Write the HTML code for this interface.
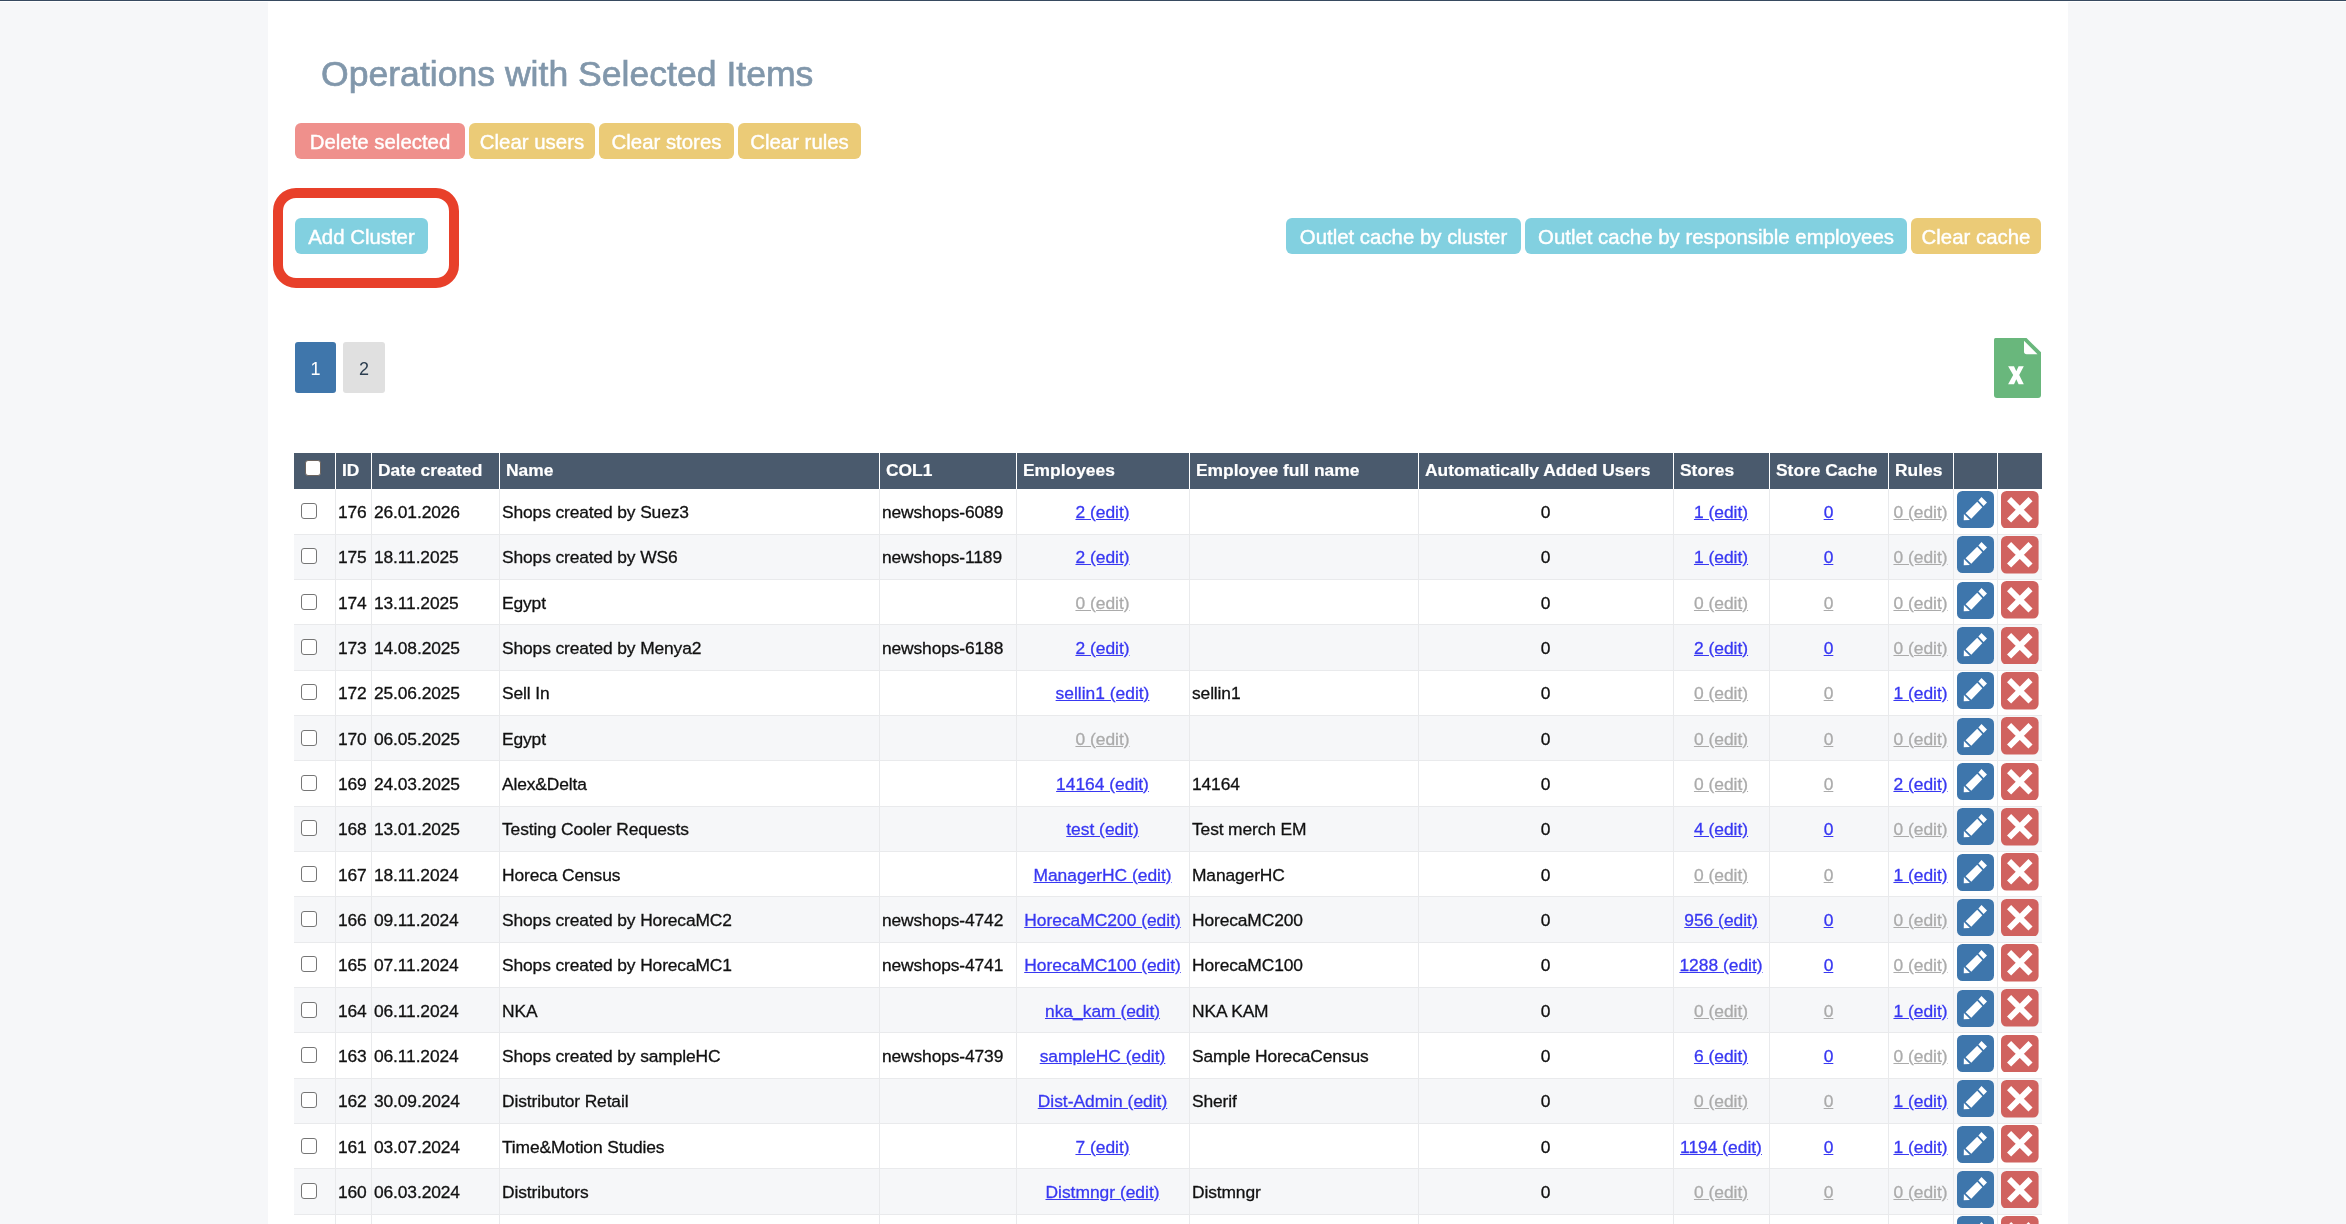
<!DOCTYPE html><html><head><meta charset="utf-8"><title>Clusters</title><style>
*{margin:0;padding:0;box-sizing:border-box}
html,body{width:2346px;height:1224px;overflow:hidden;background:#f6f7f9;font-family:"Liberation Sans",sans-serif}
.a{position:absolute}
#wrap{position:absolute;left:0;top:0;width:2346px;height:1224px;will-change:transform}
#topl{left:0;top:0;width:2346px;height:1px;background:#374a60}
#topw{left:0;top:1px;width:2346px;height:1px;background:#fff}
#panel{left:268px;top:1px;width:1800px;height:1223px;background:#fff}
#title{left:321px;top:52.3px;font-size:35.6px;line-height:44px;color:#8197ab;white-space:nowrap;-webkit-text-stroke:0.7px #8197ab}
.btn{height:36px;top:123px;border-radius:6px;color:#fff;font-size:20.4px;line-height:38px;text-align:center;white-space:nowrap;-webkit-text-stroke:0.4px #fff}
.red{background:#ef908c}.yel{background:#ebcb77}.cy{background:#82d0e0}
#hl{left:273px;top:188px;width:186px;height:100px;border:10px solid #e8402a;border-radius:23px}
.pg{top:342px;width:41px;height:51px;border-radius:3px;font-size:18px;line-height:54px;text-align:center}
.hd{top:453px;height:36px;background:#4a5a6d}
.hsep{top:453px;height:36px;width:1px;background:#fff}
.ht{top:452px;height:36px;line-height:36px;color:#fff;font-weight:bold;font-size:17.4px;white-space:nowrap;-webkit-text-stroke-width:0.2px}
.row{left:294px;width:1748px}
.rs{background:#f6f7f9}
.rb{left:294px;width:1748px;height:1px;background:#e9eaec}
.vsep{width:1px;background:#e9eaec}
.t{font-size:17.4px;white-space:nowrap;color:#111;line-height:46.5px;-webkit-text-stroke-width:0.3px;letter-spacing:-0.12px}
.c{text-align:center}
.lk{color:#3838f2;text-decoration:underline;letter-spacing:0}
.gr{color:#ababab;text-decoration:underline;letter-spacing:0}
.cb{width:16px;height:16px;border:1.3px solid #767676;border-radius:3px;background:#fff}
.eb{width:37px;height:37px;border-radius:6px;background:#3e76ac}
.db{width:38px;height:38px;border-radius:6px;background:#d0625f}
</style></head><body>
<div id="wrap">
<div class="a" id="topl"></div><div class="a" id="topw"></div><div class="a" id="panel"></div>
<div class="a" id="title">Operations with Selected Items</div>
<div class="a btn red" style="left:295px;width:170px">Delete selected</div>
<div class="a btn yel" style="left:469px;width:126px">Clear users</div>
<div class="a btn yel" style="left:599px;width:135px">Clear stores</div>
<div class="a btn yel" style="left:738px;width:123px">Clear rules</div>
<div class="a btn cy" style="left:295px;width:133px;top:218px">Add Cluster</div>
<div class="a btn cy" style="left:1286px;width:235px;top:218px">Outlet cache by cluster</div>
<div class="a btn cy" style="left:1525px;width:382px;top:218px">Outlet cache by responsible employees</div>
<div class="a btn yel" style="left:1911px;width:130px;top:218px">Clear cache</div>
<div class="a" id="hl"></div>
<div class="a pg" style="left:295px;background:#3f76ab;color:#fff">1</div>
<div class="a pg" style="left:343px;width:42px;background:#e0e0e0;color:#2c3e50">2</div>
<svg class="a" style="left:1994px;top:338px" width="47" height="60" viewBox="0 0 47 60">
<path d="M1.5 0 H32.5 L47 14.3 V57 Q47 60 44 60 H3 Q0 60 0 57 V1.5 Q0 0 1.5 0 Z" fill="#69b77c"/>
<path d="M30 2.8 V13.5 Q30 16.2 32.7 16.2 H43.5 Z" fill="#fff"/>
<path d="M14.1 28.2 H20.0 L22.3 33.2 L24.6 28.2 H29.8 L25.2 36.9 L29.8 46.3 H24.6 L22.3 41.3 L20.0 46.3 H14.1 L19.2 36.9 Z" fill="#fff"/>
</svg>
<div class="a hd" style="left:294px;width:1748px"></div>
<div class="a hsep" style="left:335px"></div>
<div class="a hsep" style="left:371px"></div>
<div class="a hsep" style="left:499px"></div>
<div class="a hsep" style="left:879px"></div>
<div class="a hsep" style="left:1016px"></div>
<div class="a hsep" style="left:1189px"></div>
<div class="a hsep" style="left:1418px"></div>
<div class="a hsep" style="left:1673px"></div>
<div class="a hsep" style="left:1769px"></div>
<div class="a hsep" style="left:1888px"></div>
<div class="a hsep" style="left:1953px"></div>
<div class="a hsep" style="left:1997px"></div>
<div class="a ht" style="left:342px">ID</div>
<div class="a ht" style="left:378px">Date created</div>
<div class="a ht" style="left:506px">Name</div>
<div class="a ht" style="left:886px">COL1</div>
<div class="a ht" style="left:1023px">Employees</div>
<div class="a ht" style="left:1196px">Employee full name</div>
<div class="a ht" style="left:1425px">Automatically Added Users</div>
<div class="a ht" style="left:1680px">Stores</div>
<div class="a ht" style="left:1776px">Store Cache</div>
<div class="a ht" style="left:1895px">Rules</div>
<div class="a cb" style="left:305px;top:460px;border-color:#6d6560"></div>
<div class="a row rs" style="top:534.333px;height:45.333px"></div>
<div class="a row rs" style="top:624.999px;height:45.333px"></div>
<div class="a row rs" style="top:715.665px;height:45.333px"></div>
<div class="a row rs" style="top:806.331px;height:45.333px"></div>
<div class="a row rs" style="top:896.997px;height:45.333px"></div>
<div class="a row rs" style="top:987.663px;height:45.333px"></div>
<div class="a row rs" style="top:1078.329px;height:45.333px"></div>
<div class="a row rs" style="top:1168.995px;height:45.333px"></div>
<div class="a rb" style="top:534px"></div>
<div class="a rb" style="top:579px"></div>
<div class="a rb" style="top:624px"></div>
<div class="a rb" style="top:670px"></div>
<div class="a rb" style="top:715px"></div>
<div class="a rb" style="top:760px"></div>
<div class="a rb" style="top:806px"></div>
<div class="a rb" style="top:851px"></div>
<div class="a rb" style="top:896px"></div>
<div class="a rb" style="top:942px"></div>
<div class="a rb" style="top:987px"></div>
<div class="a rb" style="top:1032px"></div>
<div class="a rb" style="top:1078px"></div>
<div class="a rb" style="top:1123px"></div>
<div class="a rb" style="top:1168px"></div>
<div class="a rb" style="top:1214px"></div>
<div class="a vsep" style="left:335px;top:489px;height:735px"></div>
<div class="a vsep" style="left:371px;top:489px;height:735px"></div>
<div class="a vsep" style="left:499px;top:489px;height:735px"></div>
<div class="a vsep" style="left:879px;top:489px;height:735px"></div>
<div class="a vsep" style="left:1016px;top:489px;height:735px"></div>
<div class="a vsep" style="left:1189px;top:489px;height:735px"></div>
<div class="a vsep" style="left:1418px;top:489px;height:735px"></div>
<div class="a vsep" style="left:1673px;top:489px;height:735px"></div>
<div class="a vsep" style="left:1769px;top:489px;height:735px"></div>
<div class="a vsep" style="left:1888px;top:489px;height:735px"></div>
<div class="a vsep" style="left:1953px;top:489px;height:735px"></div>
<div class="a vsep" style="left:1997px;top:489px;height:735px"></div>
<div class="a cb" style="left:301px;top:503.000px"></div>
<div class="a t" style="left:338px;top:489.000px">176</div>
<div class="a t" style="left:374px;top:489.000px">26.01.2026</div>
<div class="a t" style="left:502px;top:489.000px">Shops created by Suez3</div>
<div class="a t" style="left:882px;top:489.000px">newshops-6089</div>
<div class="a t c" style="left:1016px;width:173px;top:489.000px"><span class="lk">2 (edit)</span></div>
<div class="a t c" style="left:1418px;width:255px;top:489.000px">0</div>
<div class="a t c" style="left:1673px;width:96px;top:489.000px"><span class="lk">1 (edit)</span></div>
<div class="a t c" style="left:1769px;width:119px;top:489.000px"><span class="lk">0</span></div>
<div class="a t c" style="left:1888px;width:65px;top:489.000px"><span class="gr">0 (edit)</span></div>
<div class="a cb" style="left:301px;top:548.333px"></div>
<div class="a t" style="left:338px;top:534.333px">175</div>
<div class="a t" style="left:374px;top:534.333px">18.11.2025</div>
<div class="a t" style="left:502px;top:534.333px">Shops created by WS6</div>
<div class="a t" style="left:882px;top:534.333px">newshops-1189</div>
<div class="a t c" style="left:1016px;width:173px;top:534.333px"><span class="lk">2 (edit)</span></div>
<div class="a t c" style="left:1418px;width:255px;top:534.333px">0</div>
<div class="a t c" style="left:1673px;width:96px;top:534.333px"><span class="lk">1 (edit)</span></div>
<div class="a t c" style="left:1769px;width:119px;top:534.333px"><span class="lk">0</span></div>
<div class="a t c" style="left:1888px;width:65px;top:534.333px"><span class="gr">0 (edit)</span></div>
<div class="a cb" style="left:301px;top:593.666px"></div>
<div class="a t" style="left:338px;top:579.666px">174</div>
<div class="a t" style="left:374px;top:579.666px">13.11.2025</div>
<div class="a t" style="left:502px;top:579.666px">Egypt</div>
<div class="a t c" style="left:1016px;width:173px;top:579.666px"><span class="gr">0 (edit)</span></div>
<div class="a t c" style="left:1418px;width:255px;top:579.666px">0</div>
<div class="a t c" style="left:1673px;width:96px;top:579.666px"><span class="gr">0 (edit)</span></div>
<div class="a t c" style="left:1769px;width:119px;top:579.666px"><span class="gr">0</span></div>
<div class="a t c" style="left:1888px;width:65px;top:579.666px"><span class="gr">0 (edit)</span></div>
<div class="a cb" style="left:301px;top:638.999px"></div>
<div class="a t" style="left:338px;top:624.999px">173</div>
<div class="a t" style="left:374px;top:624.999px">14.08.2025</div>
<div class="a t" style="left:502px;top:624.999px">Shops created by Menya2</div>
<div class="a t" style="left:882px;top:624.999px">newshops-6188</div>
<div class="a t c" style="left:1016px;width:173px;top:624.999px"><span class="lk">2 (edit)</span></div>
<div class="a t c" style="left:1418px;width:255px;top:624.999px">0</div>
<div class="a t c" style="left:1673px;width:96px;top:624.999px"><span class="lk">2 (edit)</span></div>
<div class="a t c" style="left:1769px;width:119px;top:624.999px"><span class="lk">0</span></div>
<div class="a t c" style="left:1888px;width:65px;top:624.999px"><span class="gr">0 (edit)</span></div>
<div class="a cb" style="left:301px;top:684.332px"></div>
<div class="a t" style="left:338px;top:670.332px">172</div>
<div class="a t" style="left:374px;top:670.332px">25.06.2025</div>
<div class="a t" style="left:502px;top:670.332px">Sell In</div>
<div class="a t c" style="left:1016px;width:173px;top:670.332px"><span class="lk">sellin1 (edit)</span></div>
<div class="a t" style="left:1192px;top:670.332px">sellin1</div>
<div class="a t c" style="left:1418px;width:255px;top:670.332px">0</div>
<div class="a t c" style="left:1673px;width:96px;top:670.332px"><span class="gr">0 (edit)</span></div>
<div class="a t c" style="left:1769px;width:119px;top:670.332px"><span class="gr">0</span></div>
<div class="a t c" style="left:1888px;width:65px;top:670.332px"><span class="lk">1 (edit)</span></div>
<div class="a cb" style="left:301px;top:729.665px"></div>
<div class="a t" style="left:338px;top:715.665px">170</div>
<div class="a t" style="left:374px;top:715.665px">06.05.2025</div>
<div class="a t" style="left:502px;top:715.665px">Egypt</div>
<div class="a t c" style="left:1016px;width:173px;top:715.665px"><span class="gr">0 (edit)</span></div>
<div class="a t c" style="left:1418px;width:255px;top:715.665px">0</div>
<div class="a t c" style="left:1673px;width:96px;top:715.665px"><span class="gr">0 (edit)</span></div>
<div class="a t c" style="left:1769px;width:119px;top:715.665px"><span class="gr">0</span></div>
<div class="a t c" style="left:1888px;width:65px;top:715.665px"><span class="gr">0 (edit)</span></div>
<div class="a cb" style="left:301px;top:774.998px"></div>
<div class="a t" style="left:338px;top:760.998px">169</div>
<div class="a t" style="left:374px;top:760.998px">24.03.2025</div>
<div class="a t" style="left:502px;top:760.998px">Alex&amp;Delta</div>
<div class="a t c" style="left:1016px;width:173px;top:760.998px"><span class="lk">14164 (edit)</span></div>
<div class="a t" style="left:1192px;top:760.998px">14164</div>
<div class="a t c" style="left:1418px;width:255px;top:760.998px">0</div>
<div class="a t c" style="left:1673px;width:96px;top:760.998px"><span class="gr">0 (edit)</span></div>
<div class="a t c" style="left:1769px;width:119px;top:760.998px"><span class="gr">0</span></div>
<div class="a t c" style="left:1888px;width:65px;top:760.998px"><span class="lk">2 (edit)</span></div>
<div class="a cb" style="left:301px;top:820.331px"></div>
<div class="a t" style="left:338px;top:806.331px">168</div>
<div class="a t" style="left:374px;top:806.331px">13.01.2025</div>
<div class="a t" style="left:502px;top:806.331px">Testing Cooler Requests</div>
<div class="a t c" style="left:1016px;width:173px;top:806.331px"><span class="lk">test (edit)</span></div>
<div class="a t" style="left:1192px;top:806.331px">Test merch EM</div>
<div class="a t c" style="left:1418px;width:255px;top:806.331px">0</div>
<div class="a t c" style="left:1673px;width:96px;top:806.331px"><span class="lk">4 (edit)</span></div>
<div class="a t c" style="left:1769px;width:119px;top:806.331px"><span class="lk">0</span></div>
<div class="a t c" style="left:1888px;width:65px;top:806.331px"><span class="gr">0 (edit)</span></div>
<div class="a cb" style="left:301px;top:865.664px"></div>
<div class="a t" style="left:338px;top:851.664px">167</div>
<div class="a t" style="left:374px;top:851.664px">18.11.2024</div>
<div class="a t" style="left:502px;top:851.664px">Horeca Census</div>
<div class="a t c" style="left:1016px;width:173px;top:851.664px"><span class="lk">ManagerHC (edit)</span></div>
<div class="a t" style="left:1192px;top:851.664px">ManagerHC</div>
<div class="a t c" style="left:1418px;width:255px;top:851.664px">0</div>
<div class="a t c" style="left:1673px;width:96px;top:851.664px"><span class="gr">0 (edit)</span></div>
<div class="a t c" style="left:1769px;width:119px;top:851.664px"><span class="gr">0</span></div>
<div class="a t c" style="left:1888px;width:65px;top:851.664px"><span class="lk">1 (edit)</span></div>
<div class="a cb" style="left:301px;top:910.997px"></div>
<div class="a t" style="left:338px;top:896.997px">166</div>
<div class="a t" style="left:374px;top:896.997px">09.11.2024</div>
<div class="a t" style="left:502px;top:896.997px">Shops created by HorecaMC2</div>
<div class="a t" style="left:882px;top:896.997px">newshops-4742</div>
<div class="a t c" style="left:1016px;width:173px;top:896.997px"><span class="lk">HorecaMC200 (edit)</span></div>
<div class="a t" style="left:1192px;top:896.997px">HorecaMC200</div>
<div class="a t c" style="left:1418px;width:255px;top:896.997px">0</div>
<div class="a t c" style="left:1673px;width:96px;top:896.997px"><span class="lk">956 (edit)</span></div>
<div class="a t c" style="left:1769px;width:119px;top:896.997px"><span class="lk">0</span></div>
<div class="a t c" style="left:1888px;width:65px;top:896.997px"><span class="gr">0 (edit)</span></div>
<div class="a cb" style="left:301px;top:956.330px"></div>
<div class="a t" style="left:338px;top:942.330px">165</div>
<div class="a t" style="left:374px;top:942.330px">07.11.2024</div>
<div class="a t" style="left:502px;top:942.330px">Shops created by HorecaMC1</div>
<div class="a t" style="left:882px;top:942.330px">newshops-4741</div>
<div class="a t c" style="left:1016px;width:173px;top:942.330px"><span class="lk">HorecaMC100 (edit)</span></div>
<div class="a t" style="left:1192px;top:942.330px">HorecaMC100</div>
<div class="a t c" style="left:1418px;width:255px;top:942.330px">0</div>
<div class="a t c" style="left:1673px;width:96px;top:942.330px"><span class="lk">1288 (edit)</span></div>
<div class="a t c" style="left:1769px;width:119px;top:942.330px"><span class="lk">0</span></div>
<div class="a t c" style="left:1888px;width:65px;top:942.330px"><span class="gr">0 (edit)</span></div>
<div class="a cb" style="left:301px;top:1001.663px"></div>
<div class="a t" style="left:338px;top:987.663px">164</div>
<div class="a t" style="left:374px;top:987.663px">06.11.2024</div>
<div class="a t" style="left:502px;top:987.663px">NKA</div>
<div class="a t c" style="left:1016px;width:173px;top:987.663px"><span class="lk">nka_kam (edit)</span></div>
<div class="a t" style="left:1192px;top:987.663px">NKA KAM</div>
<div class="a t c" style="left:1418px;width:255px;top:987.663px">0</div>
<div class="a t c" style="left:1673px;width:96px;top:987.663px"><span class="gr">0 (edit)</span></div>
<div class="a t c" style="left:1769px;width:119px;top:987.663px"><span class="gr">0</span></div>
<div class="a t c" style="left:1888px;width:65px;top:987.663px"><span class="lk">1 (edit)</span></div>
<div class="a cb" style="left:301px;top:1046.996px"></div>
<div class="a t" style="left:338px;top:1032.996px">163</div>
<div class="a t" style="left:374px;top:1032.996px">06.11.2024</div>
<div class="a t" style="left:502px;top:1032.996px">Shops created by sampleHC</div>
<div class="a t" style="left:882px;top:1032.996px">newshops-4739</div>
<div class="a t c" style="left:1016px;width:173px;top:1032.996px"><span class="lk">sampleHC (edit)</span></div>
<div class="a t" style="left:1192px;top:1032.996px">Sample HorecaCensus</div>
<div class="a t c" style="left:1418px;width:255px;top:1032.996px">0</div>
<div class="a t c" style="left:1673px;width:96px;top:1032.996px"><span class="lk">6 (edit)</span></div>
<div class="a t c" style="left:1769px;width:119px;top:1032.996px"><span class="lk">0</span></div>
<div class="a t c" style="left:1888px;width:65px;top:1032.996px"><span class="gr">0 (edit)</span></div>
<div class="a cb" style="left:301px;top:1092.329px"></div>
<div class="a t" style="left:338px;top:1078.329px">162</div>
<div class="a t" style="left:374px;top:1078.329px">30.09.2024</div>
<div class="a t" style="left:502px;top:1078.329px">Distributor Retail</div>
<div class="a t c" style="left:1016px;width:173px;top:1078.329px"><span class="lk">Dist-Admin (edit)</span></div>
<div class="a t" style="left:1192px;top:1078.329px">Sherif</div>
<div class="a t c" style="left:1418px;width:255px;top:1078.329px">0</div>
<div class="a t c" style="left:1673px;width:96px;top:1078.329px"><span class="gr">0 (edit)</span></div>
<div class="a t c" style="left:1769px;width:119px;top:1078.329px"><span class="gr">0</span></div>
<div class="a t c" style="left:1888px;width:65px;top:1078.329px"><span class="lk">1 (edit)</span></div>
<div class="a cb" style="left:301px;top:1137.662px"></div>
<div class="a t" style="left:338px;top:1123.662px">161</div>
<div class="a t" style="left:374px;top:1123.662px">03.07.2024</div>
<div class="a t" style="left:502px;top:1123.662px">Time&amp;Motion Studies</div>
<div class="a t c" style="left:1016px;width:173px;top:1123.662px"><span class="lk">7 (edit)</span></div>
<div class="a t c" style="left:1418px;width:255px;top:1123.662px">0</div>
<div class="a t c" style="left:1673px;width:96px;top:1123.662px"><span class="lk">1194 (edit)</span></div>
<div class="a t c" style="left:1769px;width:119px;top:1123.662px"><span class="lk">0</span></div>
<div class="a t c" style="left:1888px;width:65px;top:1123.662px"><span class="lk">1 (edit)</span></div>
<div class="a cb" style="left:301px;top:1182.995px"></div>
<div class="a t" style="left:338px;top:1168.995px">160</div>
<div class="a t" style="left:374px;top:1168.995px">06.03.2024</div>
<div class="a t" style="left:502px;top:1168.995px">Distributors</div>
<div class="a t c" style="left:1016px;width:173px;top:1168.995px"><span class="lk">Distmngr (edit)</span></div>
<div class="a t" style="left:1192px;top:1168.995px">Distmngr</div>
<div class="a t c" style="left:1418px;width:255px;top:1168.995px">0</div>
<div class="a t c" style="left:1673px;width:96px;top:1168.995px"><span class="gr">0 (edit)</span></div>
<div class="a t c" style="left:1769px;width:119px;top:1168.995px"><span class="gr">0</span></div>
<div class="a t c" style="left:1888px;width:65px;top:1168.995px"><span class="gr">0 (edit)</span></div>
<svg class="a" style="left:1957px;top:491.100px" width="37" height="37" viewBox="0 0 37 37"><rect width="37" height="37" rx="5.5" fill="#3e76ac"/><path d="M6.75 29.2 L12.9 28.9 L6.9 22.9 Z M8.6 22.3 L20.2 10.8 L25.3 16.3 L14.3 27.8 Z M21.4 9.4 L24.5 6.1 L30 11.6 L26.6 15.1 Z" fill="#fff"/></svg>
<svg class="a" style="left:2001px;top:490.800px" width="37.6" height="37.6" viewBox="0 0 37.6 37.6"><rect width="37.6" height="37.6" rx="5.5" fill="#d0625f"/><path d="M8.1 8.1 L29.5 29.5 M29.5 8.1 L8.1 29.5" stroke="#fff" stroke-width="5.8"/></svg>
<svg class="a" style="left:1957px;top:536.433px" width="37" height="37" viewBox="0 0 37 37"><rect width="37" height="37" rx="5.5" fill="#3e76ac"/><path d="M6.75 29.2 L12.9 28.9 L6.9 22.9 Z M8.6 22.3 L20.2 10.8 L25.3 16.3 L14.3 27.8 Z M21.4 9.4 L24.5 6.1 L30 11.6 L26.6 15.1 Z" fill="#fff"/></svg>
<svg class="a" style="left:2001px;top:536.133px" width="37.6" height="37.6" viewBox="0 0 37.6 37.6"><rect width="37.6" height="37.6" rx="5.5" fill="#d0625f"/><path d="M8.1 8.1 L29.5 29.5 M29.5 8.1 L8.1 29.5" stroke="#fff" stroke-width="5.8"/></svg>
<svg class="a" style="left:1957px;top:581.766px" width="37" height="37" viewBox="0 0 37 37"><rect width="37" height="37" rx="5.5" fill="#3e76ac"/><path d="M6.75 29.2 L12.9 28.9 L6.9 22.9 Z M8.6 22.3 L20.2 10.8 L25.3 16.3 L14.3 27.8 Z M21.4 9.4 L24.5 6.1 L30 11.6 L26.6 15.1 Z" fill="#fff"/></svg>
<svg class="a" style="left:2001px;top:581.466px" width="37.6" height="37.6" viewBox="0 0 37.6 37.6"><rect width="37.6" height="37.6" rx="5.5" fill="#d0625f"/><path d="M8.1 8.1 L29.5 29.5 M29.5 8.1 L8.1 29.5" stroke="#fff" stroke-width="5.8"/></svg>
<svg class="a" style="left:1957px;top:627.099px" width="37" height="37" viewBox="0 0 37 37"><rect width="37" height="37" rx="5.5" fill="#3e76ac"/><path d="M6.75 29.2 L12.9 28.9 L6.9 22.9 Z M8.6 22.3 L20.2 10.8 L25.3 16.3 L14.3 27.8 Z M21.4 9.4 L24.5 6.1 L30 11.6 L26.6 15.1 Z" fill="#fff"/></svg>
<svg class="a" style="left:2001px;top:626.799px" width="37.6" height="37.6" viewBox="0 0 37.6 37.6"><rect width="37.6" height="37.6" rx="5.5" fill="#d0625f"/><path d="M8.1 8.1 L29.5 29.5 M29.5 8.1 L8.1 29.5" stroke="#fff" stroke-width="5.8"/></svg>
<svg class="a" style="left:1957px;top:672.432px" width="37" height="37" viewBox="0 0 37 37"><rect width="37" height="37" rx="5.5" fill="#3e76ac"/><path d="M6.75 29.2 L12.9 28.9 L6.9 22.9 Z M8.6 22.3 L20.2 10.8 L25.3 16.3 L14.3 27.8 Z M21.4 9.4 L24.5 6.1 L30 11.6 L26.6 15.1 Z" fill="#fff"/></svg>
<svg class="a" style="left:2001px;top:672.132px" width="37.6" height="37.6" viewBox="0 0 37.6 37.6"><rect width="37.6" height="37.6" rx="5.5" fill="#d0625f"/><path d="M8.1 8.1 L29.5 29.5 M29.5 8.1 L8.1 29.5" stroke="#fff" stroke-width="5.8"/></svg>
<svg class="a" style="left:1957px;top:717.765px" width="37" height="37" viewBox="0 0 37 37"><rect width="37" height="37" rx="5.5" fill="#3e76ac"/><path d="M6.75 29.2 L12.9 28.9 L6.9 22.9 Z M8.6 22.3 L20.2 10.8 L25.3 16.3 L14.3 27.8 Z M21.4 9.4 L24.5 6.1 L30 11.6 L26.6 15.1 Z" fill="#fff"/></svg>
<svg class="a" style="left:2001px;top:717.465px" width="37.6" height="37.6" viewBox="0 0 37.6 37.6"><rect width="37.6" height="37.6" rx="5.5" fill="#d0625f"/><path d="M8.1 8.1 L29.5 29.5 M29.5 8.1 L8.1 29.5" stroke="#fff" stroke-width="5.8"/></svg>
<svg class="a" style="left:1957px;top:763.098px" width="37" height="37" viewBox="0 0 37 37"><rect width="37" height="37" rx="5.5" fill="#3e76ac"/><path d="M6.75 29.2 L12.9 28.9 L6.9 22.9 Z M8.6 22.3 L20.2 10.8 L25.3 16.3 L14.3 27.8 Z M21.4 9.4 L24.5 6.1 L30 11.6 L26.6 15.1 Z" fill="#fff"/></svg>
<svg class="a" style="left:2001px;top:762.798px" width="37.6" height="37.6" viewBox="0 0 37.6 37.6"><rect width="37.6" height="37.6" rx="5.5" fill="#d0625f"/><path d="M8.1 8.1 L29.5 29.5 M29.5 8.1 L8.1 29.5" stroke="#fff" stroke-width="5.8"/></svg>
<svg class="a" style="left:1957px;top:808.431px" width="37" height="37" viewBox="0 0 37 37"><rect width="37" height="37" rx="5.5" fill="#3e76ac"/><path d="M6.75 29.2 L12.9 28.9 L6.9 22.9 Z M8.6 22.3 L20.2 10.8 L25.3 16.3 L14.3 27.8 Z M21.4 9.4 L24.5 6.1 L30 11.6 L26.6 15.1 Z" fill="#fff"/></svg>
<svg class="a" style="left:2001px;top:808.131px" width="37.6" height="37.6" viewBox="0 0 37.6 37.6"><rect width="37.6" height="37.6" rx="5.5" fill="#d0625f"/><path d="M8.1 8.1 L29.5 29.5 M29.5 8.1 L8.1 29.5" stroke="#fff" stroke-width="5.8"/></svg>
<svg class="a" style="left:1957px;top:853.764px" width="37" height="37" viewBox="0 0 37 37"><rect width="37" height="37" rx="5.5" fill="#3e76ac"/><path d="M6.75 29.2 L12.9 28.9 L6.9 22.9 Z M8.6 22.3 L20.2 10.8 L25.3 16.3 L14.3 27.8 Z M21.4 9.4 L24.5 6.1 L30 11.6 L26.6 15.1 Z" fill="#fff"/></svg>
<svg class="a" style="left:2001px;top:853.464px" width="37.6" height="37.6" viewBox="0 0 37.6 37.6"><rect width="37.6" height="37.6" rx="5.5" fill="#d0625f"/><path d="M8.1 8.1 L29.5 29.5 M29.5 8.1 L8.1 29.5" stroke="#fff" stroke-width="5.8"/></svg>
<svg class="a" style="left:1957px;top:899.097px" width="37" height="37" viewBox="0 0 37 37"><rect width="37" height="37" rx="5.5" fill="#3e76ac"/><path d="M6.75 29.2 L12.9 28.9 L6.9 22.9 Z M8.6 22.3 L20.2 10.8 L25.3 16.3 L14.3 27.8 Z M21.4 9.4 L24.5 6.1 L30 11.6 L26.6 15.1 Z" fill="#fff"/></svg>
<svg class="a" style="left:2001px;top:898.797px" width="37.6" height="37.6" viewBox="0 0 37.6 37.6"><rect width="37.6" height="37.6" rx="5.5" fill="#d0625f"/><path d="M8.1 8.1 L29.5 29.5 M29.5 8.1 L8.1 29.5" stroke="#fff" stroke-width="5.8"/></svg>
<svg class="a" style="left:1957px;top:944.430px" width="37" height="37" viewBox="0 0 37 37"><rect width="37" height="37" rx="5.5" fill="#3e76ac"/><path d="M6.75 29.2 L12.9 28.9 L6.9 22.9 Z M8.6 22.3 L20.2 10.8 L25.3 16.3 L14.3 27.8 Z M21.4 9.4 L24.5 6.1 L30 11.6 L26.6 15.1 Z" fill="#fff"/></svg>
<svg class="a" style="left:2001px;top:944.130px" width="37.6" height="37.6" viewBox="0 0 37.6 37.6"><rect width="37.6" height="37.6" rx="5.5" fill="#d0625f"/><path d="M8.1 8.1 L29.5 29.5 M29.5 8.1 L8.1 29.5" stroke="#fff" stroke-width="5.8"/></svg>
<svg class="a" style="left:1957px;top:989.763px" width="37" height="37" viewBox="0 0 37 37"><rect width="37" height="37" rx="5.5" fill="#3e76ac"/><path d="M6.75 29.2 L12.9 28.9 L6.9 22.9 Z M8.6 22.3 L20.2 10.8 L25.3 16.3 L14.3 27.8 Z M21.4 9.4 L24.5 6.1 L30 11.6 L26.6 15.1 Z" fill="#fff"/></svg>
<svg class="a" style="left:2001px;top:989.463px" width="37.6" height="37.6" viewBox="0 0 37.6 37.6"><rect width="37.6" height="37.6" rx="5.5" fill="#d0625f"/><path d="M8.1 8.1 L29.5 29.5 M29.5 8.1 L8.1 29.5" stroke="#fff" stroke-width="5.8"/></svg>
<svg class="a" style="left:1957px;top:1035.096px" width="37" height="37" viewBox="0 0 37 37"><rect width="37" height="37" rx="5.5" fill="#3e76ac"/><path d="M6.75 29.2 L12.9 28.9 L6.9 22.9 Z M8.6 22.3 L20.2 10.8 L25.3 16.3 L14.3 27.8 Z M21.4 9.4 L24.5 6.1 L30 11.6 L26.6 15.1 Z" fill="#fff"/></svg>
<svg class="a" style="left:2001px;top:1034.796px" width="37.6" height="37.6" viewBox="0 0 37.6 37.6"><rect width="37.6" height="37.6" rx="5.5" fill="#d0625f"/><path d="M8.1 8.1 L29.5 29.5 M29.5 8.1 L8.1 29.5" stroke="#fff" stroke-width="5.8"/></svg>
<svg class="a" style="left:1957px;top:1080.429px" width="37" height="37" viewBox="0 0 37 37"><rect width="37" height="37" rx="5.5" fill="#3e76ac"/><path d="M6.75 29.2 L12.9 28.9 L6.9 22.9 Z M8.6 22.3 L20.2 10.8 L25.3 16.3 L14.3 27.8 Z M21.4 9.4 L24.5 6.1 L30 11.6 L26.6 15.1 Z" fill="#fff"/></svg>
<svg class="a" style="left:2001px;top:1080.129px" width="37.6" height="37.6" viewBox="0 0 37.6 37.6"><rect width="37.6" height="37.6" rx="5.5" fill="#d0625f"/><path d="M8.1 8.1 L29.5 29.5 M29.5 8.1 L8.1 29.5" stroke="#fff" stroke-width="5.8"/></svg>
<svg class="a" style="left:1957px;top:1125.762px" width="37" height="37" viewBox="0 0 37 37"><rect width="37" height="37" rx="5.5" fill="#3e76ac"/><path d="M6.75 29.2 L12.9 28.9 L6.9 22.9 Z M8.6 22.3 L20.2 10.8 L25.3 16.3 L14.3 27.8 Z M21.4 9.4 L24.5 6.1 L30 11.6 L26.6 15.1 Z" fill="#fff"/></svg>
<svg class="a" style="left:2001px;top:1125.462px" width="37.6" height="37.6" viewBox="0 0 37.6 37.6"><rect width="37.6" height="37.6" rx="5.5" fill="#d0625f"/><path d="M8.1 8.1 L29.5 29.5 M29.5 8.1 L8.1 29.5" stroke="#fff" stroke-width="5.8"/></svg>
<svg class="a" style="left:1957px;top:1171.095px" width="37" height="37" viewBox="0 0 37 37"><rect width="37" height="37" rx="5.5" fill="#3e76ac"/><path d="M6.75 29.2 L12.9 28.9 L6.9 22.9 Z M8.6 22.3 L20.2 10.8 L25.3 16.3 L14.3 27.8 Z M21.4 9.4 L24.5 6.1 L30 11.6 L26.6 15.1 Z" fill="#fff"/></svg>
<svg class="a" style="left:2001px;top:1170.795px" width="37.6" height="37.6" viewBox="0 0 37.6 37.6"><rect width="37.6" height="37.6" rx="5.5" fill="#d0625f"/><path d="M8.1 8.1 L29.5 29.5 M29.5 8.1 L8.1 29.5" stroke="#fff" stroke-width="5.8"/></svg>
<svg class="a" style="left:1957px;top:1216.428px" width="37" height="37" viewBox="0 0 37 37"><rect width="37" height="37" rx="5.5" fill="#3e76ac"/><path d="M6.75 29.2 L12.9 28.9 L6.9 22.9 Z M8.6 22.3 L20.2 10.8 L25.3 16.3 L14.3 27.8 Z M21.4 9.4 L24.5 6.1 L30 11.6 L26.6 15.1 Z" fill="#fff"/></svg>
<svg class="a" style="left:2001px;top:1216.128px" width="37.6" height="37.6" viewBox="0 0 37.6 37.6"><rect width="37.6" height="37.6" rx="5.5" fill="#d0625f"/><path d="M8.1 8.1 L29.5 29.5 M29.5 8.1 L8.1 29.5" stroke="#fff" stroke-width="5.8"/></svg>
</div></body></html>
